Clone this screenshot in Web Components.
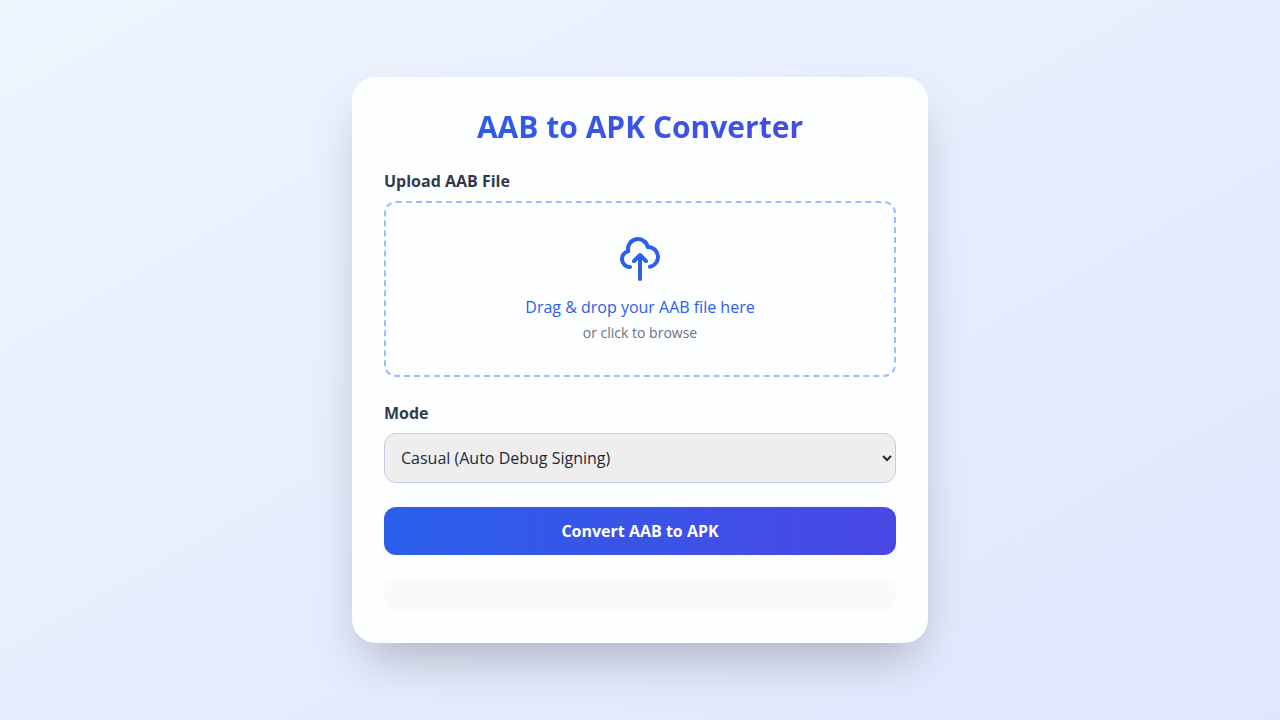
<!DOCTYPE html>
<html lang="en">
<head>
<meta charset="utf-8">
<meta name="viewport" content="width=device-width, initial-scale=1">
<title>AAB to APK Converter</title>
<style>
  body {
    margin: 0;
    font-family: "Open Sans", sans-serif;
    font-size: 16px;
    line-height: 24px;
    color: #1f2937;
  }
</style>
</head>
<body>
<converter-page>
  <converter-card heading="AAB to APK Converter">
    <file-drop label="Upload AAB File" prompt="Drag &amp; drop your AAB file here" hint="or click to browse"></file-drop>
    <mode-select label="Mode"></mode-select>
    <submit-button>Convert AAB to APK</submit-button>
    <status-panel></status-panel>
  </converter-card>
</converter-page>

<script>
  class BaseElement extends HTMLElement {
    connectedCallback() {
      if (this.shadowRoot) return;
      this.attachShadow({ mode: "open" }).innerHTML =
        `<style>*, *::before, *::after { box-sizing: border-box; } :host { display: block; }</style>` + this.render();
      for (const node of this.shadowRoot.querySelectorAll("[data-text]")) {
        node.textContent = this.getAttribute(node.dataset.text);
      }
    }
  }

  customElements.define("converter-page", class extends BaseElement {
    render() {
      return `<style>
        :host {
          display: flex; align-items: center; justify-content: center;
          box-sizing: border-box; min-height: 100vh; padding: 16px;
          background: linear-gradient(to bottom right, #eef5ff, #e0e6fd);
        }
        ::slotted(*) { width: 100%; max-width: 576px; }
      </style><slot></slot>`;
    }
  });

  customElements.define("converter-card", class extends BaseElement {
    render() {
      return `<style>
        :host {
          box-sizing: border-box; padding: 32px; border-radius: 24px; background: #fdfeff;
          box-shadow: 0 25px 50px -12px rgba(0, 0, 0, .25);
        }
        main { display: flex; flex-direction: column; gap: 24px; }
        h1 {
          margin: 0; font-size: 30px; line-height: 36px; font-weight: 700; text-align: center;
          color: transparent; background: linear-gradient(to right, #2a5fea, #4a48e5);
          -webkit-background-clip: text; background-clip: text;
        }
      </style><main><h1 data-text="heading"></h1><slot></slot></main>`;
    }
  });

  customElements.define("file-drop", class extends BaseElement {
    render() {
      return `<style>
        .title { display: block; margin-bottom: 8px; font-weight: 700; color: #323b4b; }
        .zone {
          display: flex; flex-direction: column; align-items: center;
          padding: 32px; border: 2px dashed #99c0fb; border-radius: 12px;
          text-align: center; cursor: pointer;
        }
        svg { width: 48px; height: 48px; margin-bottom: 12px; color: #2a5fea; }
        .prompt { color: #2a5fea; }
        .hint { margin-top: 4px; font-size: 14px; line-height: 20px; color: #6b7280; }
      </style>
      <label class="title" for="file" data-text="label"></label>
      <label class="zone" for="file">
        <svg viewBox="0 0 24 24" fill="none" stroke="currentColor" stroke-width="2" stroke-linecap="round" stroke-linejoin="round" aria-hidden="true">
          <path d="M7 16a4 4 0 01-.88-7.903A5 5 0 1115.9 6L16 6a5 5 0 011 9.9M15 13l-3-3m0 0l-3 3m3-3v12"/>
        </svg>
        <span class="prompt" data-text="prompt"></span>
        <span class="hint" data-text="hint"></span>
      </label>
      <input id="file" type="file" accept=".aab" hidden>`;
    }
  });

  customElements.define("mode-select", class extends BaseElement {
    render() {
      return `<style>
        label { display: block; margin-bottom: 8px; font-weight: 700; color: #323b4b; }
        select {
          display: block; width: 100%; height: 50px; padding: 12px; border: 1px solid #c5cde2; border-radius: 12px;
          background: #eeeeee; color: #1f2937; font: inherit;
        }
      </style>
      <label for="mode" data-text="label"></label>
      <select id="mode"><option>Casual (Auto Debug Signing)</option></select>`;
    }
  });

  customElements.define("submit-button", class extends BaseElement {
    render() {
      return `<style>
        button {
          display: block; width: 100%; padding: 12px; border: 0; border-radius: 12px;
          background: linear-gradient(to right, #2a5fea, #4a48e5);
          color: #fff; font: inherit; font-weight: 700; cursor: pointer;
        }
      </style><button type="button"><slot></slot></button>`;
    }
  });

  customElements.define("status-panel", class extends BaseElement {
    render() {
      return `<style>
        div { min-height: 32px; padding: 16px; border-radius: 12px; background: #f9fafc; }
      </style><div role="status"><slot></slot></div>`;
    }
  });
</script>
</body>
</html>
